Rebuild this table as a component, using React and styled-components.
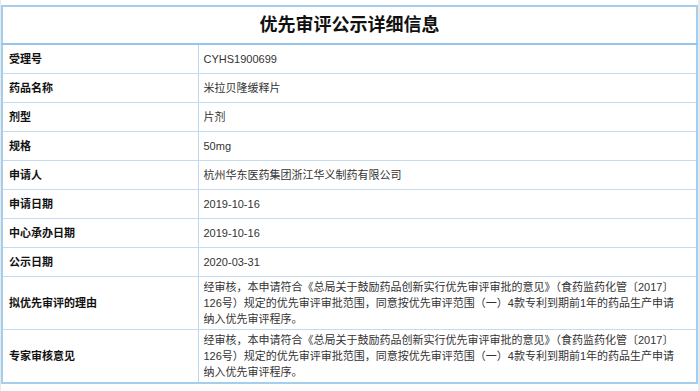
import styled, { createGlobalStyle } from "styled-components"

const rows = [
    { label: "受理号", value: "CYHS1900699" },
    { label: "药品名称", value: "米拉贝隆缓释片" },
    { label: "剂型", value: "片剂" },
    { label: "规格", value: "50mg" },
    { label: "申请人", value: "杭州华东医药集团浙江华义制药有限公司" },
    { label: "申请日期", value: "2019-10-16" },
    { label: "中心承办日期", value: "2019-10-16" },
    { label: "公示日期", value: "2020-03-31" },
    {
        label: "拟优先审评的理由",
        value: "经审核，本申请符合《总局关于鼓励药品创新实行优先审评审批的意见》（食药监药化管〔2017〕126号）规定的优先审评审批范围，同意按优先审评范围（一）4款专利到期前1年的药品生产申请纳入优先审评程序。",
    },
    {
        label: "专家审核意见",
        value: "经审核，本申请符合《总局关于鼓励药品创新实行优先审评审批的意见》（食药监药化管〔2017〕126号）规定的优先审评审批范围，同意按优先审评范围（一）4款专利到期前1年的药品生产申请纳入优先审评程序。",
    },
]

export default function App() {
    return (
        <>
            <GlobalStyle />
            <Page>
                <InfoTable>
                    <colgroup>
                        <LabelCol />
                        <col />
                    </colgroup>
                    <tbody>
                        <tr>
                            <Title colSpan={2}>优先审评公示详细信息</Title>
                        </tr>
                        {rows.map((row) => (
                            <tr key={row.label}>
                                <Label>{row.label}</Label>
                                <Value>{row.value}</Value>
                            </tr>
                        ))}
                    </tbody>
                </InfoTable>
            </Page>
        </>
    )
}

const GlobalStyle = createGlobalStyle`
    html, body {
        margin: 0;
        padding: 0;
        background: #e9e9e9;
    }
    body {
        font-family: "Liberation Sans", "Noto Sans CJK SC", sans-serif;
    }
`
const Page = styled.div`
    background: #fff;
    margin: 0 2px 0 1px;
    padding-top: 5px;
    min-height: 100vh;
    box-sizing: border-box;
`
const InfoTable = styled.table`
    width: 100%;
    border-collapse: collapse;
    border: 2px solid #a5cdee;
    table-layout: fixed;
    font-size: 11px;
    line-height: 16px;
`
const LabelCol = styled.col`
    width: 196px;
`
const Title = styled.th`
    height: 36px;
    padding: 0;
    text-align: center;
    font-size: 18px;
    font-weight: 700;
    color: #111;
    border-bottom: 2px solid #96c5ec;
`
const Label = styled.td`
    height: 24px;
    padding: 2px 6px;
    font-weight: 700;
    color: #111;
    border-bottom: 1px solid #c4dbef;
    border-right: 1px solid #bcd7ee;
    vertical-align: middle;
`
const Value = styled.td`
    height: 24px;
    padding: 2px 18px 2px 5px;
    color: #333;
    border-bottom: 1px solid #c4dbef;
    vertical-align: middle;
`
